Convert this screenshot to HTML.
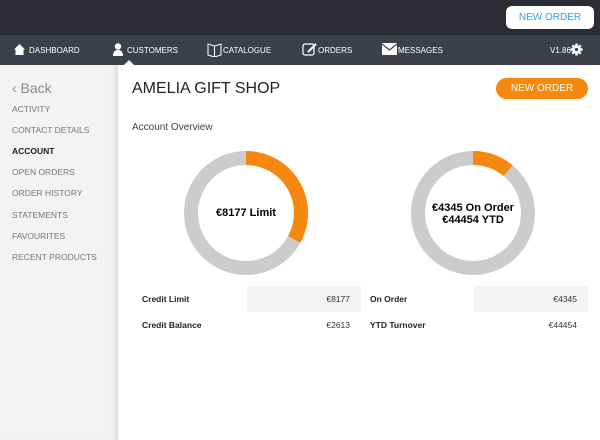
<!DOCTYPE html>
<html><head><style>
*{margin:0;padding:0;box-sizing:border-box}
body{width:600px;height:440px;overflow:hidden;font-family:"Liberation Sans",sans-serif;background:#fff;position:relative}
.top{position:absolute;left:0;top:0;width:600px;height:35px;background:#2b2c34}
.btn1{position:absolute;left:506px;top:6px;width:88px;height:23px;background:#fff;border-radius:6px;color:#3a9ee0;font-size:10px;text-align:center;line-height:23px}
.nav{position:absolute;left:0;top:35px;width:600px;height:30px;background:#3d404b;color:#fff;font-size:8px}
.nav span{position:absolute;top:11px}
.side{position:absolute;left:0;top:65px;width:118px;height:375px;background:#f3f3f4;box-shadow:inset -6px 0 6px -4px rgba(0,0,0,.12)}
.side div{position:absolute;left:12px;font-size:8.5px;color:#777}
h1{position:absolute;left:132px;top:80px;font-size:16px;font-weight:normal;color:#222}
.btn2{position:absolute;left:496px;top:78px;width:92px;height:21px;background:#f7880f;border-radius:11px;color:#fff;font-size:10px;text-align:center;line-height:21px}
.ao{position:absolute;left:132px;top:122px;font-size:10px;color:#444}
.lbl{position:absolute;font-size:8.5px;font-weight:bold;color:#222}
.val{position:absolute;font-size:8.5px;color:#333;text-align:right}
.cell{position:absolute;background:#f3f3f3;height:26px;top:286px}
.ct{position:absolute;font-weight:bold;font-size:11px;text-align:center;color:#000;width:120px}
</style></head><body>
<div class="top"><div class="btn1">NEW ORDER</div></div>
<div class="nav">
<svg style="position:absolute;left:14px;top:9px" width="11" height="11"><path d="M5.5 0L0 5.5H1.5V11H9.5V5.5H11Z" fill="#fff"/></svg>
<span style="left:29px">DASHBOARD</span>
<svg style="position:absolute;left:112px;top:8px" width="12" height="13"><circle cx="6" cy="3.5" r="3.2" fill="#fff"/><path d="M1 13Q1 7 6 7Q11 7 11 13Z" fill="#fff"/></svg>
<span style="left:127px">CUSTOMERS</span>
<svg style="position:absolute;left:207px;top:7px" width="15" height="15"><path d="M1 2L7.5 4L14 2V13L7.5 15L1 13Z M7.5 4V15" fill="none" stroke="#fff" stroke-width="1"/></svg>
<span style="left:223px">CATALOGUE</span>
<svg style="position:absolute;left:302px;top:7px" width="15" height="15"><rect x="1" y="2" width="11" height="11" rx="2" fill="none" stroke="#fff" stroke-width="1.2"/><path d="M6 10L14 2" stroke="#fff" stroke-width="2"/></svg>
<span style="left:318px">ORDERS</span>
<svg style="position:absolute;left:382px;top:8px" width="15" height="12"><rect width="15" height="12" fill="#fff"/><path d="M0 1L7.5 7L15 1" fill="none" stroke="#3d404b" stroke-width="1.2"/></svg>
<span style="left:398px">MESSAGES</span>
<span style="left:550px">V1.86</span>
<svg style="position:absolute;left:570px;top:8px" width="13" height="13"><path d="M6.5 0.5V12.5M0.5 6.5H12.5M2.3 2.3L10.7 10.7M10.7 2.3L2.3 10.7" stroke="#fff" stroke-width="2.4"/><circle cx="6.5" cy="6.5" r="4.3" fill="#fff"/><circle cx="6.5" cy="6.5" r="1.6" fill="#3d404b"/></svg>
<svg style="position:absolute;left:123px;top:25px" width="12" height="6"><path d="M0 6L6 0L12 6Z" fill="#fff"/></svg>
</div>
<div class="side">
<div style="top:15px;font-size:14px;color:#888">&lsaquo; Back</div>
<div style="top:39px">ACTIVITY</div>
<div style="top:60px">CONTACT DETAILS</div>
<div style="top:81px;color:#222;font-weight:bold">ACCOUNT</div>
<div style="top:102px">OPEN ORDERS</div>
<div style="top:123px">ORDER HISTORY</div>
<div style="top:145px">STATEMENTS</div>
<div style="top:166px">FAVOURITES</div>
<div style="top:187px">RECENT PRODUCTS</div>
</div>
<h1>AMELIA GIFT SHOP</h1>
<div class="btn2">NEW ORDER</div>
<div class="ao">Account Overview</div>
<svg style="position:absolute;left:0;top:0" width="600" height="440">
<circle cx="246" cy="213" r="55" fill="none" stroke="#cccccc" stroke-width="14"/>
<circle cx="246" cy="213" r="55" fill="none" stroke="#f7880f" stroke-width="14" stroke-dasharray="114 400" transform="rotate(-90 246 213)"/>
<circle cx="473" cy="213" r="55" fill="none" stroke="#cccccc" stroke-width="14"/>
<circle cx="473" cy="213" r="55" fill="none" stroke="#f7880f" stroke-width="14" stroke-dasharray="38 400" transform="rotate(-90 473 213)"/>
</svg>
<div class="ct" style="left:186px;top:207px">€8177 Limit</div>
<div class="ct" style="left:413px;top:202px;line-height:12px">€4345 On Order<br>€44454 YTD</div>
<div class="cell" style="left:247px;width:114px"></div>
<div class="cell" style="left:474px;width:114px"></div>
<div class="lbl" style="left:142px;top:294px">Credit Limit</div>
<div class="val" style="left:280px;width:70px;top:294px">€8177</div>
<div class="lbl" style="left:370px;top:294px">On Order</div>
<div class="val" style="left:507px;width:70px;top:294px">€4345</div>
<div class="lbl" style="left:142px;top:320px">Credit Balance</div>
<div class="val" style="left:280px;width:70px;top:320px">€2613</div>
<div class="lbl" style="left:370px;top:320px">YTD Turnover</div>
<div class="val" style="left:507px;width:70px;top:320px">€44454</div>
</body></html>
